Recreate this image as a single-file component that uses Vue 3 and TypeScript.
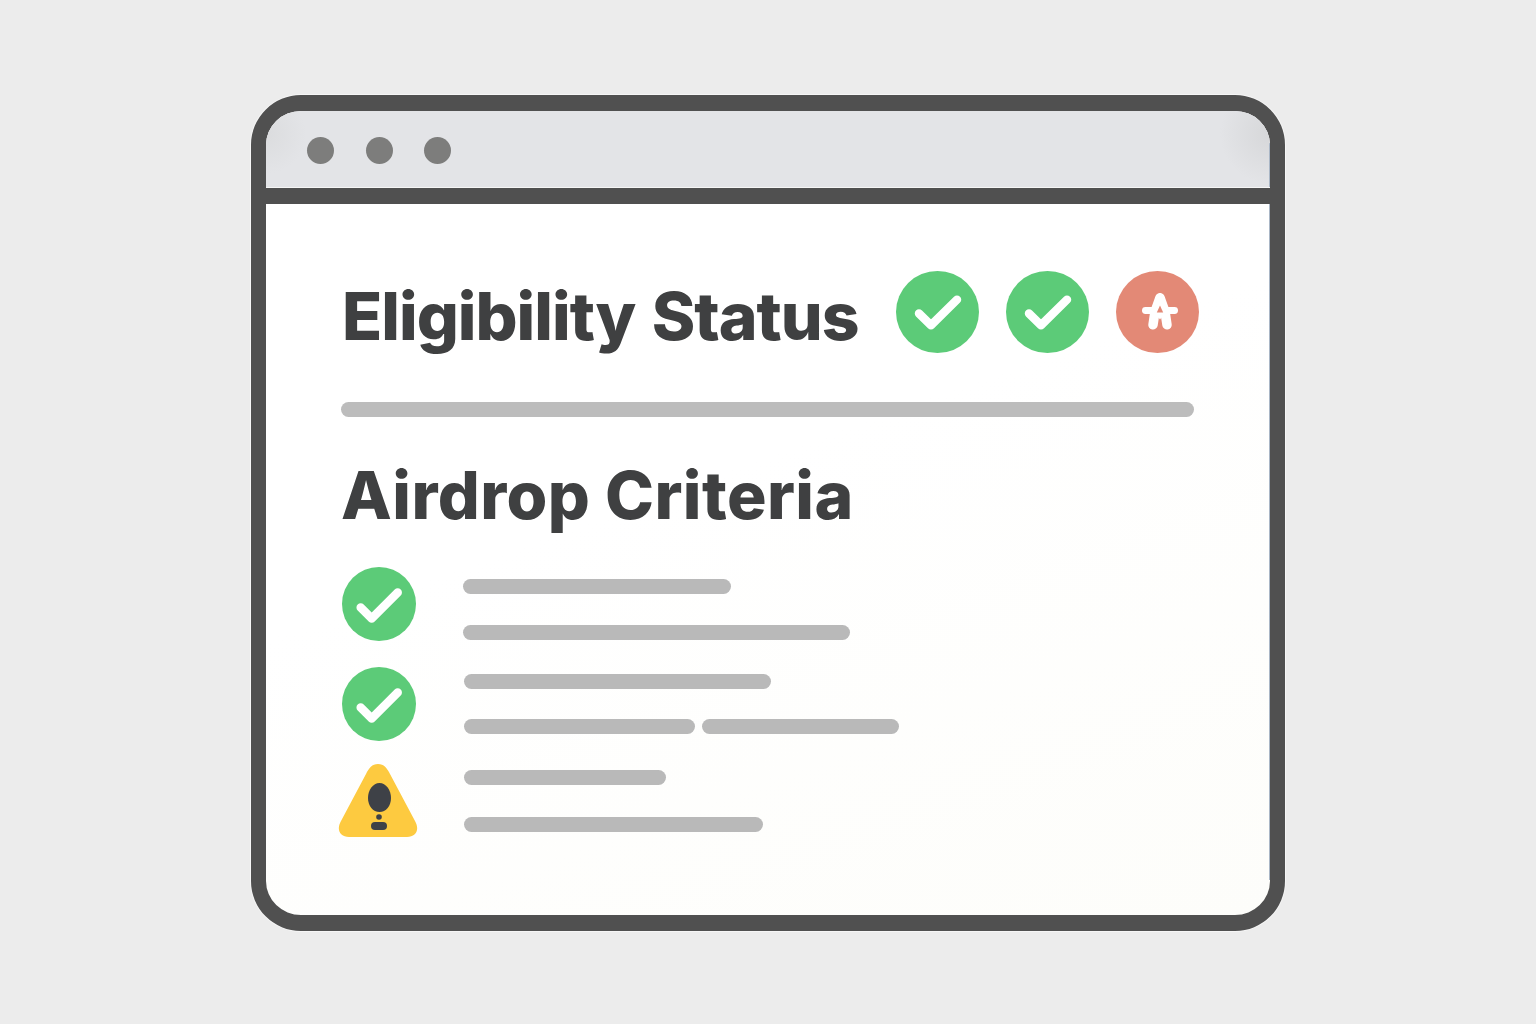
<script setup lang="ts">
interface Bar { width: number }
interface Row { icon: 'check' | 'warn'; top: number; gap: number; left: number; lines: Bar[][] }
const rows: Row[] = [
  { icon: 'check', top: 12, gap: 31, left: -1, lines: [[{ width: 268 }], [{ width: 387 }]] },
  { icon: 'check', top: 7, gap: 30, left: 0, lines: [[{ width: 307 }], [{ width: 231 }, { width: 197 }]] },
  { icon: 'warn', top: 3, gap: 32, left: 0, lines: [[{ width: 202 }], [{ width: 299 }]] },
]
</script>

<template>
  <div class="page">
    <div class="window">
      <header class="titlebar">
        <span class="dot"></span><span class="dot"></span><span class="dot"></span>
      </header>
      <main class="content">
        <div class="status">
          <h1 class="title">Eligibility Status</h1>
          <div class="badges">
            <svg class="badge" viewBox="0 0 83 83" preserveAspectRatio="none"><circle cx="41.5" cy="41.5" r="41.5" fill="#5ccb78"/><path d="M23 43 L35 55 L61 29" fill="none" stroke="#fff" stroke-width="8.500" stroke-linecap="round" stroke-linejoin="round"/></svg>
            <svg class="badge" viewBox="0 0 83 83" preserveAspectRatio="none"><circle cx="41.5" cy="41.5" r="41.5" fill="#5ccb78"/><path d="M23 43 L35 55 L61 29" fill="none" stroke="#fff" stroke-width="8.500" stroke-linecap="round" stroke-linejoin="round"/></svg>
            <svg class="badge" viewBox="0 0 83 83" preserveAspectRatio="none">
              <circle cx="41.5" cy="41.5" r="41.5" fill="#e38976"/>
              <path d="M29.500 40 H58.500" fill="none" stroke="#fff" stroke-width="7" stroke-linecap="round"/>
              <path d="M44 27 L39 41 L37 54.500 M44 27 L49 41 L51 54.500" fill="none" stroke="#fff" stroke-width="9.500" stroke-linecap="round" stroke-linejoin="round"/>
              <path d="M38 41 L44 30 L50 41 L44 49 Z" fill="#fff"/>
              <path d="M44 35 L40.800 42 H47.200 Z" fill="#e38976"/>
            </svg>
          </div>
        </div>
        <div class="rule"></div>
        <h2 class="subtitle">Airdrop Criteria</h2>
        <ul class="criteria">
          <li v-for="(row, i) in rows" :key="i" class="criterion">
            <div class="icon-cell">
              <svg v-if="row.icon === 'check'" class="check" viewBox="0 0 74 74"><circle cx="37" cy="37" r="37" fill="#5ccb78"/><path d="M18.700 40.500 L29.700 51.500 L55.700 25.500" fill="none" stroke="#fff" stroke-width="8.500" stroke-linecap="round" stroke-linejoin="round"/></svg>
              <svg v-else class="warn" viewBox="0 0 80 74">
                <path d="M40 0 C34 0 31 4 28 10 L3 57 C-2 66 2 73 11 73 H69 C78 73 82 66 77 57 L52 10 C49 4 46 0 40 0 Z" fill="#fdca40"/>
                <path d="M41.500 19 C48 19 53 26 53 34 C53 42 48 48 41.500 48 C35 48 30 42 30 34 C30 26 35 19 41.500 19 Z" fill="#3e4147"/>
                <circle cx="41" cy="53" r="2.800" fill="#3e4147"/>
                <rect x="33" y="58" width="16" height="8" rx="4" fill="#3e4147"/>
              </svg>
            </div>
            <div class="lines" :style="{ paddingTop: row.top + 'px', gap: row.gap + 'px', marginLeft: row.left + 'px' }">
              <div v-for="(line, j) in row.lines" :key="j" class="line">
                <span v-for="(bar, k) in line" :key="k" class="bar" :style="{ width: bar.width + 'px' }"></span>
              </div>
            </div>
          </li>
        </ul>
      </main>
    </div>
  </div>
</template>

<style>
html, body { margin: 0; background: #ececec; }
</style>

<style scoped>
.page {
  width: 1536px;
  height: 1024px;
  box-sizing: border-box;
  padding-top: 95px;
  display: flex;
  justify-content: center;
  align-items: flex-start;
  background: #ececec;
  overflow: hidden;
}
.window {
  width: 1034px;
  height: 836px;
  box-sizing: border-box;
  border: solid #505050;
  border-width: 16px 15px;
  border-radius: 50px;
  background: linear-gradient(160deg, #ffffff 45%, #fdfdfa 100%);
  box-shadow: 0 0 0 1px rgba(255, 255, 255, 0.5);
  display: flex;
  flex-direction: column;
  overflow: hidden;
}
.titlebar {
  height: 77px;
  flex: none;
  box-sizing: border-box;
  border-bottom: 1px solid #f6f6f6;
  background:
    linear-gradient(#a9b6c6, #a9b6c6) right bottom / 1px 44px no-repeat,
    radial-gradient(circle at 100% 30%, #d6d7d9 0, rgba(214, 215, 217, 0) 50px),
    radial-gradient(circle at 0 30%, #dbdcde 0, rgba(219, 220, 222, 0) 40px),
    #e3e4e7;
  display: flex;
  align-items: center;
  padding: 3px 0 0 41px;
  gap: 31.500px;
}
.dot {
  width: 27px;
  height: 27px;
  border-radius: 50%;
  background: #7d7d7c;
}
.content {
  flex: 1;
  border-top: 16px solid #505050;
  background: linear-gradient(#a9b6c6, #a9b6c6) right top / 1px 676px no-repeat;
  padding: 0 0 0 75px;
  min-height: 0;
}
.status {
  display: flex;
  align-items: flex-start;
  height: 198px;
  box-sizing: border-box;
  padding-top: 67px;
}
.title, .subtitle {
  margin: 0;
  font-family: Inter, "Liberation Sans", sans-serif;
  font-weight: 800;
  color: #3f4041;
  white-space: nowrap;
  font-size: 66px;
  line-height: 90px;
  height: 90px;
}
.title {
  letter-spacing: -1px;
  word-spacing: 3px;
  width: 555px;
  padding-left: 1px;
  box-sizing: border-box;
}
.badges {
  display: flex;
  gap: 27px;
}
.badge {
  width: 83px;
  height: 82px;
}
.rule {
  width: 853px;
  height: 15px;
  border-radius: 8px;
  background: #bcbcbc;
}
.subtitle {
  margin-top: 33px;
  letter-spacing: 0.4px;
}
.criteria {
  list-style: none;
  margin: 27px 0 0;
  padding: 0 0 0 1px;
  display: flex;
  flex-direction: column;
  gap: 26px;
}
.criterion {
  display: flex;
  height: 74px;
}
.icon-cell {
  width: 122px;
  flex: none;
  display: flex;
  align-items: flex-start;
}
.check {
  width: 74px;
  height: 74px;
}
.warn {
  width: 80px;
  height: 74px;
  margin: -3px 0 0 -4px;
}
.lines {
  display: flex;
  flex-direction: column;
}
.line {
  display: flex;
  gap: 7px;
}
.bar {
  display: block;
  height: 15px;
  border-radius: 8px;
  background: #b9b9b9;
}
</style>
